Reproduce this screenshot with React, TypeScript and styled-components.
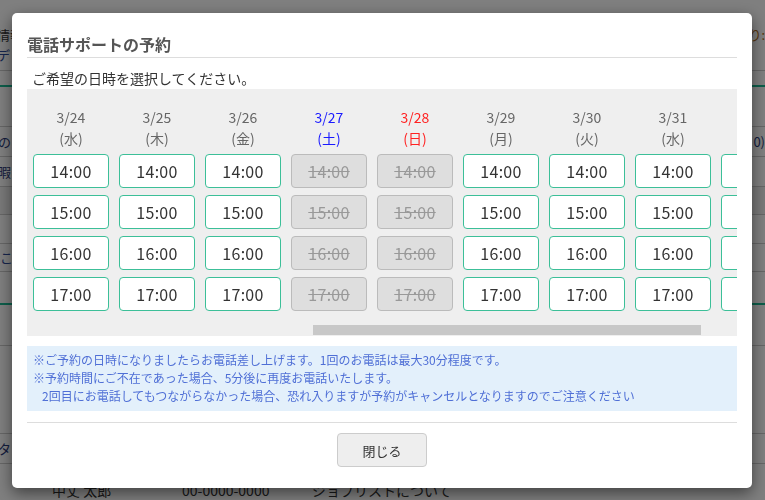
import React, { useLayoutEffect, useRef, useState } from 'react'
import styled, { createGlobalStyle } from 'styled-components'

const GlobalStyle = createGlobalStyle`
  html, body {
    margin: 0;
    padding: 0;
    background: #fff;
    font-family: "Noto Sans CJK JP", "Noto Sans", sans-serif;
    color: #333;
  }
  * { box-sizing: border-box; }
`

type Day = { date: string; dow: string; kind: 'normal' | 'sat' | 'sun' }

const DOW = ['日', '月', '火', '水', '木', '金', '土']

const days: Day[] = Array.from({ length: 15 }, (_, i) => {
  const d = new Date(2021, 2, 18 + i)
  const w = d.getDay()
  return {
    date: `${d.getMonth() + 1}/${d.getDate()}`,
    dow: DOW[w],
    kind: w === 6 ? 'sat' : w === 0 ? 'sun' : 'normal',
  }
})

const times = ['14:00', '15:00', '16:00', '17:00']

const App = () => {
  const scrollRef = useRef<HTMLDivElement>(null)
  const [thumb, setThumb] = useState({ left: 0, width: 0 })

  useLayoutEffect(() => {
    const el = scrollRef.current
    if (!el) return
    el.scrollLeft = 516
    const ratio = el.clientWidth / el.scrollWidth
    setThumb({ left: el.scrollLeft * ratio + 4, width: el.clientWidth * ratio })
  }, [])

  return (
    <>
      <GlobalStyle />
      <Page>
        <TopInfo>
          <InfoLeft>
            <div>情報</div>
            <BlueText>デ</BlueText>
          </InfoLeft>
          <InfoRight>り:</InfoRight>
        </TopInfo>
        <GreenBar />
        <BgRow h={40} />
        <BgRow h={30}><BgCell>のこ</BgCell><BgCellRight>0)</BgCellRight></BgRow>
        <BgRow h={30}><BgCell>暇</BgCell></BgRow>
        <BgRow h={28} shade />
        <BgRow h={29} />
        <BgRow h={28}><BlueText>こ</BlueText></BgRow>
        <BgRow h={31} noBorder />
        <GreenBar />
        <BgRow h={41} />
        <BgRow h={88} />
        <BgRow h={30}><BgCell>タス</BgCell></BgRow>
        <BottomRow>
          <span>中丈 太郎</span>
          <span>00-0000-0000</span>
          <span>ジョブリストについて</span>
        </BottomRow>
      </Page>

      <Overlay>
        <Modal>
          <Title>電話サポートの予約</Title>
          <Lead>ご希望の日時を選択してください。</Lead>

          <Calendar>
            <Scroller ref={scrollRef}>
              <Columns>
                {days.map((d) => (
                  <Column key={d.date}>
                    <DayHead kind={d.kind}>
                      <div>{d.date}</div>
                      <div>({d.dow})</div>
                    </DayHead>
                    {times.map((t) => (
                      <Slot key={t} disabled={d.kind !== 'normal'}>
                        {t}
                      </Slot>
                    ))}
                  </Column>
                ))}
              </Columns>
            </Scroller>
            <Track>
              <Thumb style={{ marginLeft: thumb.left, width: thumb.width }} />
            </Track>
          </Calendar>

          <Notice>
            <div>※ご予約の日時になりましたらお電話差し上げます。1回のお電話は最大30分程度です。</div>
            <div>※予約時間にご不在であった場合、5分後に再度お電話いたします。</div>
            <Indent>2回目にお電話してもつながらなかった場合、恐れ入りますが予約がキャンセルとなりますのでご注意ください</Indent>
          </Notice>

          <Footer>
            <CloseButton>閉じる</CloseButton>
          </Footer>
        </Modal>
      </Overlay>
    </>
  )
}

export default App

const Page = styled.div`
  width: 765px;
  height: 500px;
  overflow: hidden;
  display: flex;
  flex-direction: column;
  font-size: 13px;
  color: #333;
`

const TopInfo = styled.div`
  height: 73px;
  display: flex;
  justify-content: space-between;
  padding-top: 25px;
  border-bottom: 1px solid #ccc;
  margin-bottom: 14px;
`

const InfoLeft = styled.div`
  margin-left: -3px;
  line-height: 20px;
`

const InfoRight = styled.div`
  line-height: 20px;
  color: #b06a20;
`

const BlueText = styled.div`
  color: #2a4a9a;
`

const GreenBar = styled.div`
  height: 2px;
  background: #1abc94;
  flex-shrink: 0;
`

const BgRow = styled.div<{ h: number; shade?: boolean; noBorder?: boolean }>`
  height: ${(p) => p.h}px;
  flex-shrink: 0;
  display: flex;
  align-items: center;
  justify-content: space-between;
  background: ${(p) => (p.shade ? '#f2f2f2' : '#fff')};
  border-bottom: ${(p) => (p.noBorder ? 'none' : '1px solid #ccc')};
`

const BgCell = styled.div`
  color: #2a3a7a;
  margin-left: -2px;
`

const BgCellRight = styled.div`
  color: #2a3a7a;
`

const BottomRow = styled.div`
  display: flex;
  padding-top: 16px;
  font-size: 14px;
  color: #333;

  span:nth-child(1) { margin-left: 52px; width: 130px; }
  span:nth-child(2) { width: 130px; }
`

const Overlay = styled.div`
  position: fixed;
  inset: 0;
  background: rgba(0, 0, 0, 0.5);
  display: flex;
  align-items: flex-start;
  padding: 13px 13px 0 12px;
`

const Modal = styled.div`
  width: 740px;
  background: #fff;
  border-radius: 5px;
  padding: 15px 15px 21px;
  box-shadow: 0 5px 15px rgba(0, 0, 0, 0.5);
`

const Title = styled.div`
  font-size: 16px;
  font-weight: bold;
  color: #555;
  line-height: 22px;
  padding: 5px 0 2px;
  border-bottom: 1px solid #ddd;
`

const Lead = styled.div`
  font-size: 14px;
  line-height: 20px;
  color: #333;
  margin-top: 10px;
  padding-left: 5px;
`

const Calendar = styled.div`
  margin-top: 1px;
  background: #efefef;
`

const Scroller = styled.div`
  overflow: hidden;
`

const Track = styled.div`
  height: 11px;
  display: flex;
`

const Thumb = styled.div`
  height: 10px;
  background: #c8c8c8;
`

const Columns = styled.div`
  display: flex;
  gap: 10px;
  width: max-content;
  padding: 18px 13px 14px 6px;
`

const Column = styled.div`
  width: 76px;
  display: flex;
  flex-direction: column;
  gap: 7px;
`

const DayHead = styled.div<{ kind: 'normal' | 'sat' | 'sun' }>`
  text-align: center;
  font-size: 14px;
  line-height: 21px;
  margin-bottom: -2px;
  color: ${(p) => (p.kind === 'sat' ? '#1a1aff' : p.kind === 'sun' ? '#ff2222' : '#666')};
`

const Slot = styled.div<{ disabled: boolean }>`
  height: 34px;
  display: flex;
  align-items: center;
  justify-content: center;
  font-size: 16px;
  letter-spacing: 0.3px;
  border-radius: 4px;
  border: 1px solid ${(p) => (p.disabled ? '#bbb' : '#3cbf98')};
  background: ${(p) => (p.disabled ? '#dedede' : '#fff')};
  color: ${(p) => (p.disabled ? '#999' : '#333')};
  text-decoration: ${(p) => (p.disabled ? 'line-through' : 'none')};
`

const Notice = styled.div`
  margin-top: 10px;
  background: #e3f0fb;
  color: #4f6fd6;
  font-size: 12px;
  line-height: 18px;
  padding: 5px 6px 6px;
`

const Indent = styled.div`
  padding-left: 9px;
`

const Footer = styled.div`
  margin-top: 11px;
  border-top: 1px solid #ddd;
  padding-top: 10px;
  display: flex;
  justify-content: center;
`

const CloseButton = styled.button`
  width: 90px;
  height: 34px;
  background: #eee;
  border: 1px solid #ccc;
  border-radius: 4px;
  font-family: inherit;
  font-size: 13px;
  color: #333;
`
